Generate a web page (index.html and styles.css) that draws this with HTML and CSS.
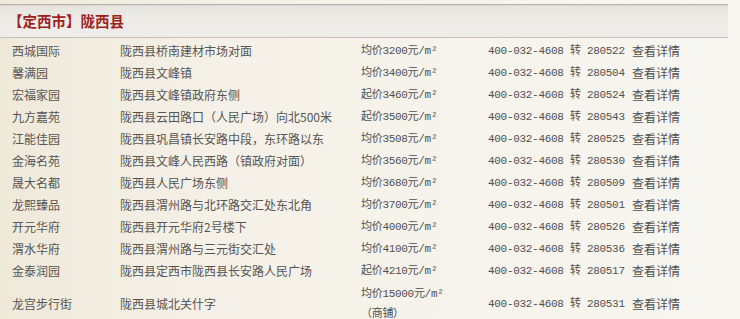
FILE: index.html
```html
<!DOCTYPE html>
<html lang="zh-CN">
<head>
<meta charset="utf-8">
<title>【定西市】陇西县</title>
<link rel="stylesheet" href="styles.css">
</head>
<body>
<div class="page">
  <div class="title-bar"><h2 class="title">【定西市】陇西县</h2></div>
  <div class="list">
    <div class="row"><span class="name">西城国际</span><span class="addr">陇西县桥南建材市场对面</span><span class="price">均价3200元/m²</span><span class="phone">400-032-4608 转 280522</span><a class="more">查看详情</a></div>
    <div class="row"><span class="name">馨满园</span><span class="addr">陇西县文峰镇</span><span class="price">均价3400元/m²</span><span class="phone">400-032-4608 转 280504</span><a class="more">查看详情</a></div>
    <div class="row"><span class="name">宏福家园</span><span class="addr">陇西县文峰镇政府东侧</span><span class="price">起价3460元/m²</span><span class="phone">400-032-4608 转 280524</span><a class="more">查看详情</a></div>
    <div class="row"><span class="name">九方嘉苑</span><span class="addr">陇西县云田路口（人民广场）向北500米</span><span class="price">起价3500元/m²</span><span class="phone">400-032-4608 转 280543</span><a class="more">查看详情</a></div>
    <div class="row"><span class="name">江能佳园</span><span class="addr">陇西县巩昌镇长安路中段，东环路以东</span><span class="price">均价3508元/m²</span><span class="phone">400-032-4608 转 280525</span><a class="more">查看详情</a></div>
    <div class="row"><span class="name">金海名苑</span><span class="addr">陇西县文峰人民西路（镇政府对面）</span><span class="price">均价3560元/m²</span><span class="phone">400-032-4608 转 280530</span><a class="more">查看详情</a></div>
    <div class="row"><span class="name">晟大名都</span><span class="addr">陇西县人民广场东侧</span><span class="price">均价3680元/m²</span><span class="phone">400-032-4608 转 280509</span><a class="more">查看详情</a></div>
    <div class="row"><span class="name">龙熙臻品</span><span class="addr">陇西县渭州路与北环路交汇处东北角</span><span class="price">均价3700元/m²</span><span class="phone">400-032-4608 转 280501</span><a class="more">查看详情</a></div>
    <div class="row"><span class="name">开元华府</span><span class="addr">陇西县开元华府2号楼下</span><span class="price">均价4000元/m²</span><span class="phone">400-032-4608 转 280526</span><a class="more">查看详情</a></div>
    <div class="row"><span class="name">渭水华府</span><span class="addr">陇西县渭州路与三元街交汇处</span><span class="price">均价4100元/m²</span><span class="phone">400-032-4608 转 280536</span><a class="more">查看详情</a></div>
    <div class="row"><span class="name">金泰润园</span><span class="addr">陇西县定西市陇西县长安路人民广场</span><span class="price">起价4210元/m²</span><span class="phone">400-032-4608 转 280517</span><a class="more">查看详情</a></div>
    <div class="row row-tall"><span class="name">龙宫步行街</span><span class="addr">陇西县城北关什字</span><span class="price">均价15000元/m²<br>（商铺）</span><span class="phone">400-032-4608 转 280531</span><a class="more">查看详情</a></div>
  </div>
</div>
</body>
</html>
```

FILE: styles.css
```css
html, body {
  margin: 0;
  padding: 0;
}

body {
  width: 740px;
  height: 319px;
  overflow: hidden;
  background: linear-gradient(90deg, #efe9da 0%, #f5f1e8 30%, #f8f6f1 100%);
  font-family: "Noto Sans CJK SC", sans-serif;
  color: #555555;
}

.page {
  padding-top: 4px;
}

.title-bar {
  width: 728px;
  height: 32px;
  border-top: 1px solid #b4b1ab;
  border-bottom: 1px solid #c4c1bb;
  background: linear-gradient(180deg, #e6e3de 0%, #ecebe6 40%, #efede9 100%);
  box-shadow: inset 0 1px 1px rgba(0, 0, 0, 0.05);
}

.title {
  margin: 0;
  padding-left: 8px;
  font-size: 14.5px;
  line-height: 32px;
  font-weight: bold;
  color: #a01f1f;
  font-family: "Noto Sans CJK SC", sans-serif;
}

.list {
  margin-top: 2px;
}

.row {
  display: grid;
  grid-template-columns: 108px 241px 127px 144px auto;
  align-items: center;
  padding: 1px 0 1px 12px;
  font-size: 12px;
  line-height: 20px;
}

.row-tall {
  padding-top: 2px;
}

.price,
.phone {
  font-family: "Liberation Mono", "Noto Sans CJK SC", monospace;
  font-size: 11px;
  letter-spacing: -0.3px;
  color: #505050;
}

.more {
  color: #505050;
  text-decoration: none;
}
```
